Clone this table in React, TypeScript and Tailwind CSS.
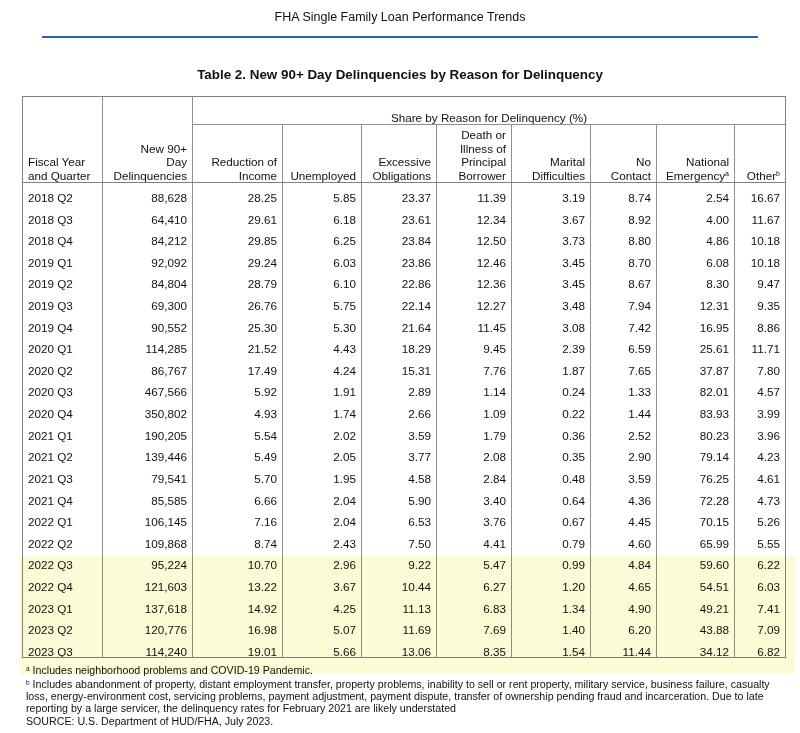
import React from 'react';

const rows: string[][] = [
  ['2018 Q2', '88,628', '28.25', '5.85', '23.37', '11.39', '3.19', '8.74', '2.54', '16.67'],
  ['2018 Q3', '64,410', '29.61', '6.18', '23.61', '12.34', '3.67', '8.92', '4.00', '11.67'],
  ['2018 Q4', '84,212', '29.85', '6.25', '23.84', '12.50', '3.73', '8.80', '4.86', '10.18'],
  ['2019 Q1', '92,092', '29.24', '6.03', '23.86', '12.46', '3.45', '8.70', '6.08', '10.18'],
  ['2019 Q2', '84,804', '28.79', '6.10', '22.86', '12.36', '3.45', '8.67', '8.30', '9.47'],
  ['2019 Q3', '69,300', '26.76', '5.75', '22.14', '12.27', '3.48', '7.94', '12.31', '9.35'],
  ['2019 Q4', '90,552', '25.30', '5.30', '21.64', '11.45', '3.08', '7.42', '16.95', '8.86'],
  ['2020 Q1', '114,285', '21.52', '4.43', '18.29', '9.45', '2.39', '6.59', '25.61', '11.71'],
  ['2020 Q2', '86,767', '17.49', '4.24', '15.31', '7.76', '1.87', '7.65', '37.87', '7.80'],
  ['2020 Q3', '467,566', '5.92', '1.91', '2.89', '1.14', '0.24', '1.33', '82.01', '4.57'],
  ['2020 Q4', '350,802', '4.93', '1.74', '2.66', '1.09', '0.22', '1.44', '83.93', '3.99'],
  ['2021 Q1', '190,205', '5.54', '2.02', '3.59', '1.79', '0.36', '2.52', '80.23', '3.96'],
  ['2021 Q2', '139,446', '5.49', '2.05', '3.77', '2.08', '0.35', '2.90', '79.14', '4.23'],
  ['2021 Q3', '79,541', '5.70', '1.95', '4.58', '2.84', '0.48', '3.59', '76.25', '4.61'],
  ['2021 Q4', '85,585', '6.66', '2.04', '5.90', '3.40', '0.64', '4.36', '72.28', '4.73'],
  ['2022 Q1', '106,145', '7.16', '2.04', '6.53', '3.76', '0.67', '4.45', '70.15', '5.26'],
  ['2022 Q2', '109,868', '8.74', '2.43', '7.50', '4.41', '0.79', '4.60', '65.99', '5.55'],
  ['2022 Q3', '95,224', '10.70', '2.96', '9.22', '5.47', '0.99', '4.84', '59.60', '6.22'],
  ['2022 Q4', '121,603', '13.22', '3.67', '10.44', '6.27', '1.20', '4.65', '54.51', '6.03'],
  ['2023 Q1', '137,618', '14.92', '4.25', '11.13', '6.83', '1.34', '4.90', '49.21', '7.41'],
  ['2023 Q2', '120,776', '16.98', '5.07', '11.69', '7.69', '1.40', '6.20', '43.88', '7.09'],
  ['2023 Q3', '114,240', '19.01', '5.66', '13.06', '8.35', '1.54', '11.44', '34.12', '6.82'],
];

// column template shared by header and body
const cols = 'grid grid-cols-[80px_90px_90px_79px_75px_75px_79px_66px_78px_50px]';

function SubHead({ children, last }: { children: React.ReactNode; last?: boolean }) {
  return (
    <div
      className={`flex flex-col justify-end items-end text-right pr-[5px] leading-[13.5px] ${
        last ? '' : 'border-r border-[#909090]'
      }`}
    >
      {children}
    </div>
  );
}

export default function App() {
  return (
    <div className="relative w-[800px] h-[733px] bg-white overflow-hidden text-[#111] font-['Liberation_Sans',Arial,sans-serif]">
      <div className="pt-[10px] text-center text-[12.5px] leading-[15px]">
        FHA Single Family Loan Performance Trends
      </div>
      <div className="mx-[42px] mt-[11px] h-[2px] bg-[#2f62b4]" />

      <div className="mt-[29px] text-center text-[13.4px] font-bold leading-[15px]">
        Table 2. New 90+ Day Delinquencies by Reason for Delinquency
      </div>

      <div className="ml-[22px] mt-[14px] w-[764px] border border-[#808080] text-[11.7px]">
        {/* header */}
        <div className={`${cols} grid-rows-[28px_57px] border-b border-[#808080]`}>
          <div className="row-span-2 flex flex-col justify-end pl-[5px] leading-[13.5px] border-r border-[#909090]">
            <span>Fiscal Year</span>
            <span>and Quarter</span>
          </div>
          <div className="row-span-2 flex flex-col justify-end items-end pr-[5px] leading-[13.5px] border-r border-[#909090]">
            <span>New 90+</span>
            <span>Day</span>
            <span>Delinquencies</span>
          </div>
          <div className="col-span-8 flex items-end justify-center leading-[12px] border-b border-[#909090]">
            Share by Reason for Delinquency (%)
          </div>
          <SubHead>
            <span>Reduction of</span>
            <span>Income</span>
          </SubHead>
          <SubHead>
            <span>Unemployed</span>
          </SubHead>
          <SubHead>
            <span>Excessive</span>
            <span>Obligations</span>
          </SubHead>
          <SubHead>
            <span>Death or</span>
            <span>Illness of</span>
            <span>Principal</span>
            <span>Borrower</span>
          </SubHead>
          <SubHead>
            <span>Marital</span>
            <span>Difficulties</span>
          </SubHead>
          <SubHead>
            <span>No</span>
            <span>Contact</span>
          </SubHead>
          <SubHead>
            <span>National</span>
            <span>
              Emergency<sup className="text-[7px]">a</sup>
            </span>
          </SubHead>
          <SubHead last>
            <span>
              Other<sup className="text-[7px]">b</sup>
            </span>
          </SubHead>
        </div>

        {/* body */}
        <div className="h-[474px] overflow-hidden">
          <div className="h-[4px] grid grid-cols-[80px_90px_90px_79px_75px_75px_79px_66px_78px_50px]">
            {Array.from({ length: 9 }).map((_, i) => (
              <div key={i} className="border-r border-[#909090]" />
            ))}
          </div>
          {rows.map((r) => (
            <div key={r[0]} className={`${cols} h-[21.62px] leading-[21.62px]`}>
              {r.map((v, j) => (
                <div
                  key={j}
                  className={`${j === 0 ? 'pl-[5px] text-left' : 'pr-[5px] text-right'} ${
                    j === 9 ? '' : 'border-r border-[#909090]'
                  }`}
                >
                  {v}
                </div>
              ))}
            </div>
          ))}
        </div>
      </div>

      {/* footnotes */}
      <div className="mt-[6px] pl-[26px] text-[10.65px] leading-[12.2px] whitespace-nowrap">
        <div>
          <sup className="text-[6.5px]">a</sup> Includes neighborhood problems and COVID-19 Pandemic.
        </div>
        <div className="mt-[1.8px]">
          <sup className="text-[6.5px]">b</sup> Includes abandonment of property, distant employment transfer, property problems,
          inability to sell or rent property, military service, business failure, casualty
          <br />
          loss, energy-environment cost, servicing problems, payment adjustment, payment dispute, transfer of ownership pending
          fraud and incarceration. Due to late
          <br />
          reporting by a large servicer, the delinquency rates for February 2021 are likely understated
        </div>
        <div>SOURCE: U.S. Department of HUD/FHA, July 2023.</div>
      </div>

      {/* highlight band over the latest quarters */}
      <div className="absolute left-[20px] top-[556px] w-[775px] h-[118px] bg-[#fbfbd6] mix-blend-multiply pointer-events-none" />
    </div>
  );
}
